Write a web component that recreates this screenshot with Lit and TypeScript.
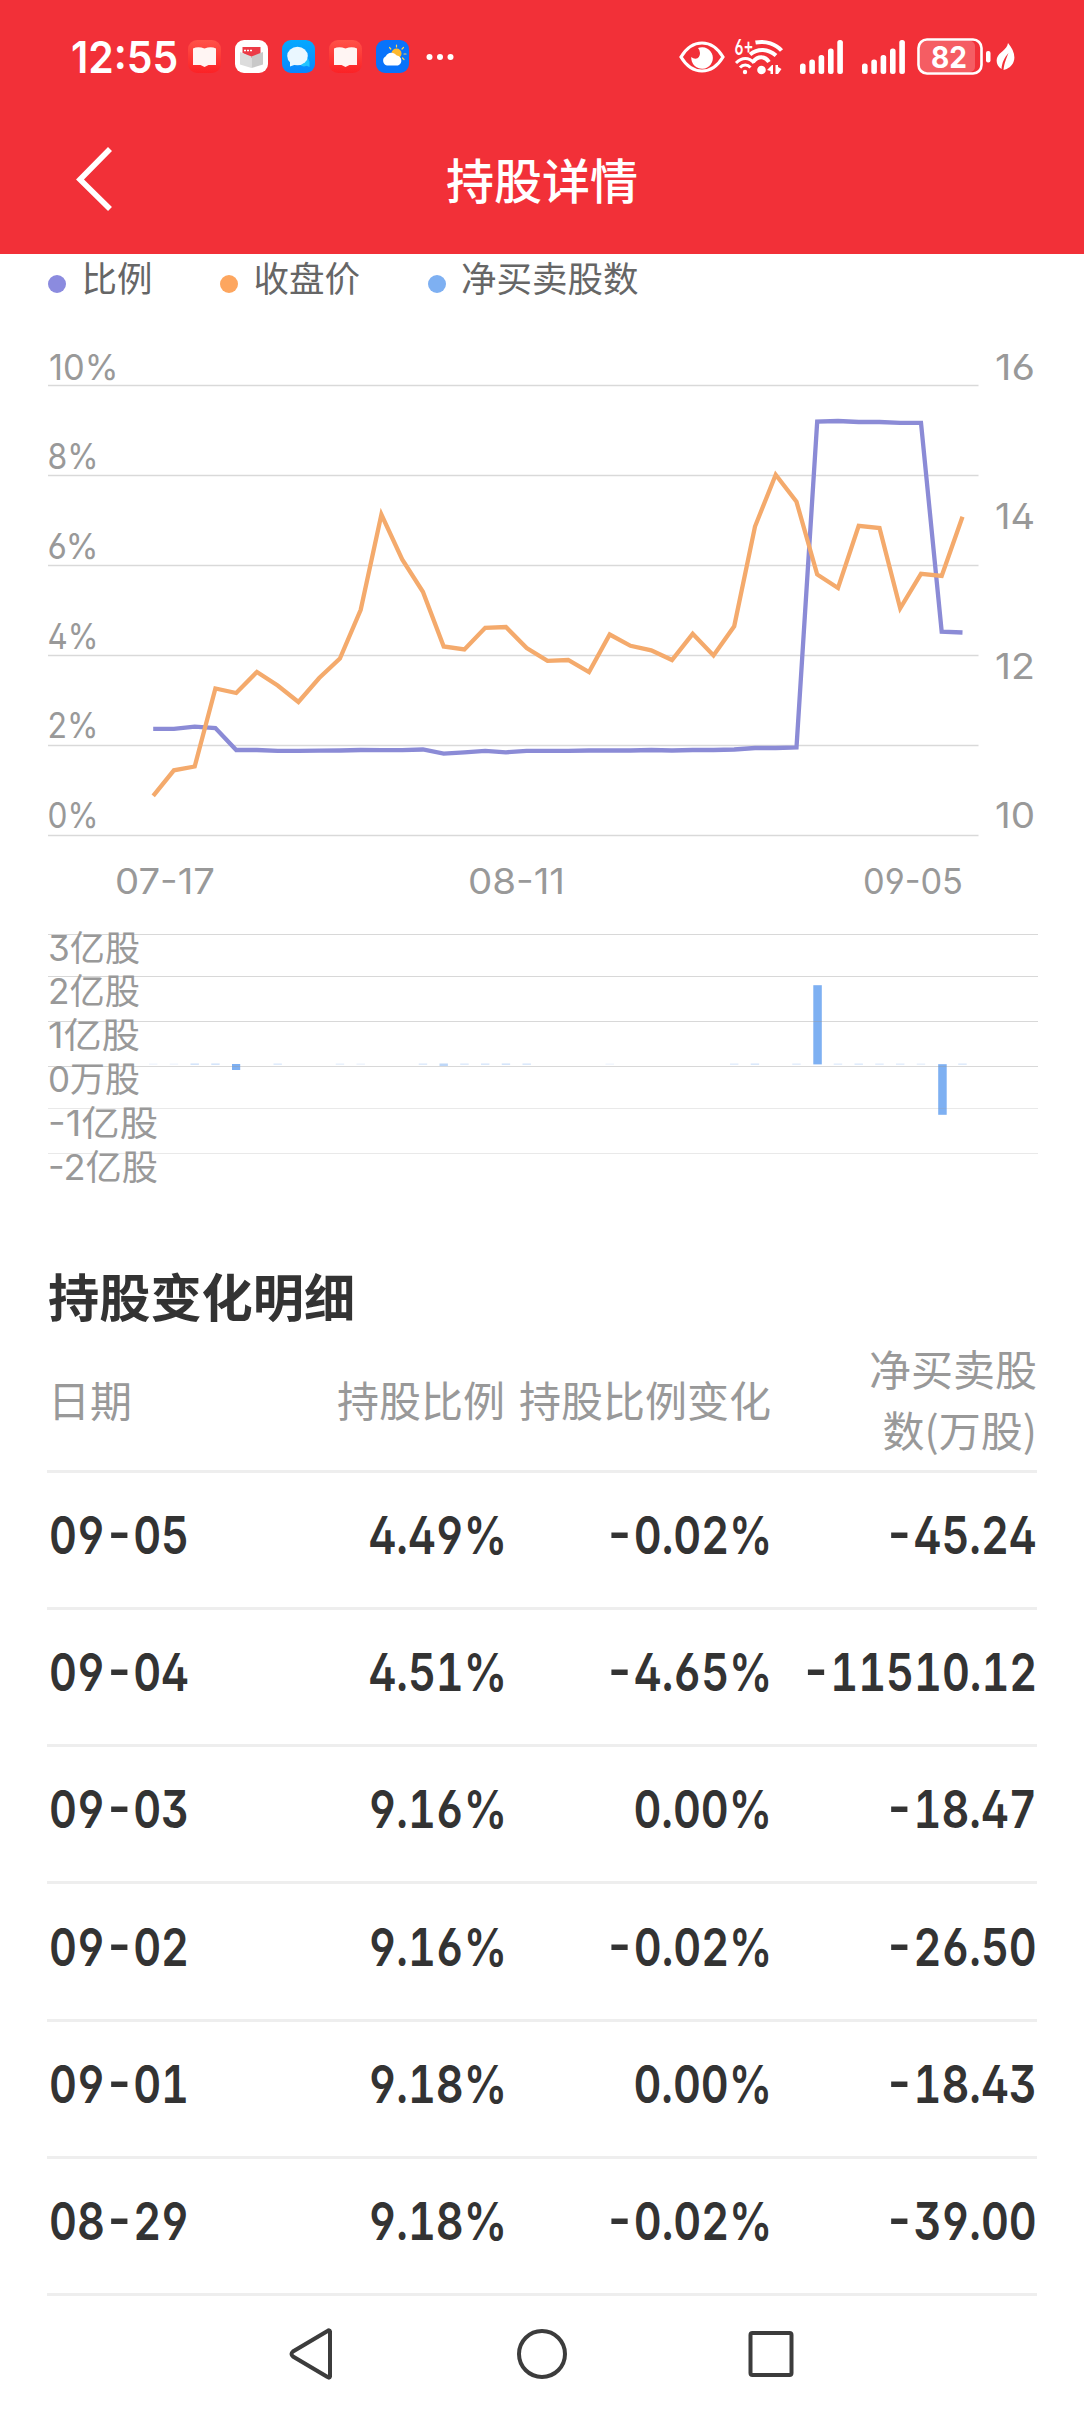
import { LitElement, html, svg, css } from "lit";
import { customElement } from "lit/decorators.js";

const PRICE = [
  10.53, 10.87, 10.92, 11.96, 11.9, 12.18, 12.0, 11.78, 12.1, 12.36,
  13.01, 14.28, 13.68, 13.25, 12.52, 12.48, 12.77, 12.78, 12.5, 12.33,
  12.34, 12.18, 12.68, 12.53, 12.47, 12.34, 12.69, 12.4, 12.79, 14.12,
  14.81, 14.45, 13.48, 13.3, 14.13, 14.1, 13.03, 13.49, 13.46, 14.25,
];
const RATIO = [
  2.37, 2.37, 2.42, 2.39, 1.9, 1.9, 1.88, 1.88, 1.885, 1.89,
  1.9, 1.895, 1.895, 1.91, 1.82, 1.85, 1.88, 1.85, 1.88, 1.88,
  1.88, 1.89, 1.89, 1.89, 1.9, 1.89, 1.9, 1.9, 1.91, 1.945,
  1.945, 1.96, 9.2, 9.21, 9.19, 9.19, 9.17, 9.17, 4.53, 4.51,
];
const X0 = 153.2;
const STEP = 20.75;
const BASE = 835.5;

const px = (i: number) => X0 + i * STEP;
const line = (data: number[], y: (v: number) => number) =>
  data.map((v, i) => `${px(i).toFixed(1)},${y(v).toFixed(1)}`).join(" ");

/* x, baseline, text, drawn width */
type Label = [number, number, string, number];
const LABELS: Label[] = [
  [49, 379.5, "10%", 69.5],
  [47.5, 469, "8%", 51],
  [47.5, 558.7, "6%", 51],
  [47.5, 648.5, "4%", 51],
  [47.5, 738, "2%", 51],
  [47.5, 827.8, "0%", 51],
  [995, 379.5, "16", 40],
  [995, 528.7, "14", 40],
  [995, 678.5, "12", 40],
  [995, 827.8, "10", 40],
  [115, 893.5, "07-17", 100],
  [468, 893.5, "08-11", 97],
  [863, 893.5, "09-05", 100],
];
const VOLUME_LABELS: Label[] = [
  [48, 960.5, "3亿股", 92],
  [48, 1004.3, "2亿股", 92],
  [48, 1048.1, "1亿股", 92],
  [48, 1091.8, "0万股", 92],
  [48, 1136, "-1亿股", 110],
  [48, 1180, "-2亿股", 110],
];
/* index, opacity of the near-zero volume marks */
const MARKS: [number, number][] = [
  [0, 0.12], [1, 0.12], [2, 0.4], [3, 0.4], [6, 0.3], [9, 0.2], [10, 0.15],
  [13, 0.3], [14, 0.5], [15, 0.3], [16, 0.35], [17, 0.4], [18, 0.35],
  [22, 0.12], [28, 0.25], [29, 0.35], [31, 0.25], [33, 0.25], [34, 0.3],
  [35, 0.25], [36, 0.25], [37, 0.2], [39, 0.3],
];

const ROWS = [
  ["09-05", "4.49%", "-0.02%", "-45.24"],
  ["09-04", "4.51%", "-4.65%", "-11510.12"],
  ["09-03", "9.16%", "0.00%", "-18.47"],
  ["09-02", "9.16%", "-0.02%", "-26.50"],
  ["09-01", "9.18%", "0.00%", "-18.43"],
  ["08-29", "9.18%", "-0.02%", "-39.00"],
];

const bookIcon = html`<svg class="app" viewBox="0 0 33 33">
  <defs><linearGradient id="bk" x1="0" y1="0" x2="0" y2="1"><stop offset="0" stop-color="#ff5148"/><stop offset="1" stop-color="#fb2226"/></linearGradient></defs>
  <rect width="33" height="33" rx="9" fill="url(#bk)"/>
  <path d="M5 8.5Q10 6 16.5 8.5Q23 6 28 8.5V25H20.5L16.5 27L12.500 25H5Z" fill="#fff5f3"/>
</svg>`;

const newsIcon = html`<svg class="app" viewBox="0 0 33 33">
  <rect width="33" height="33" rx="9" fill="#fff"/>
  <path d="M7.500 7H25.500V15L16.500 18L7.500 13Z" fill="#ec3b46"/>
  <path d="M9 10.500H18" stroke="#fff" stroke-width="1.400" stroke-dasharray="2 1"/>
  <path d="M5 12L16.500 16.500V28L5 24.500Z" fill="#dcdcdc"/>
  <path d="M28 12L16.500 16.500V28L28 24.500Z" fill="#c9c9c9"/>
</svg>`;

const chatIcon = html`<svg class="app" viewBox="0 0 33 33">
  <defs><linearGradient id="ch" x1="0" y1="0" x2="0" y2="1"><stop offset="0" stop-color="#04a9ff"/><stop offset="1" stop-color="#0a86ff"/></linearGradient></defs>
  <rect width="33" height="33" rx="9" fill="url(#ch)"/>
  <circle cx="22" cy="21.500" r="5" fill="#22c4ff"/><path d="M23 25L27.500 27V21Z" fill="#22c4ff"/>
  <ellipse cx="15.500" cy="16" rx="10.300" ry="9.300" fill="#eaf7ff"/>
  <path d="M8 21L8 26.500L15 24Z" fill="#eaf7ff"/>
</svg>`;

const weatherIcon = html`<svg class="app" viewBox="0 0 33 33">
  <rect width="33" height="33" rx="9" fill="#0873fb"/>
  <g stroke="#ffd34d" stroke-width="1.200" stroke-linecap="round"><path d="M20.500 7V5M14.800 9L13.500 7.500M26 9L27.500 7.500M28 14H30M26.500 18L28 19.500"/></g>
  <circle cx="20.500" cy="13.500" r="5" fill="#fdb92e"/>
  <path d="M11 25.500A5 5 0 0 1 9.800 16.200A6.500 6.500 0 0 1 20.800 15.500A5.200 5.200 0 0 1 22 25.500Z" fill="#fff"/>
</svg>`;

const signalIcon = html`<svg class="signal" viewBox="0 0 43 34" fill="#fff">
  <rect y="23.500" width="5.600" height="10.500" rx="2.500"/><rect x="9.300" y="19.500" width="5.600" height="14.500" rx="2.500"/>
  <rect x="18.600" y="15" width="5.600" height="19" rx="2.500"/><rect x="28" y="8.500" width="5.600" height="25.500" rx="2.500"/>
  <rect x="37.300" width="5.600" height="34" rx="2.500"/>
</svg>`;

@customElement("app-root")
export class AppRoot extends LitElement {
  static styles = css`
    :host {
      display: block;
      width: 1084px;
      height: 2412px;
      overflow: hidden;
      background: #fff;
      font-family: Inter, "Noto Sans CJK SC", sans-serif;
      font-feature-settings: "case", "cv03", "cv04", "ss01";
    }
    * { box-sizing: border-box; }
    svg { display: block; flex: none; }
    .top { height: 254px; background: #f23038; color: #fff; }
    .status { height: 113px; display: flex; align-items: center; padding: 0 69px 0 71px; }
    .time {
      width: 117px; font-size: 43.500px; font-weight: 600; line-height: 50px;
      font-feature-settings: "case"; white-space: nowrap;
    }
    .clock { display: inline-block; transform: scaleX(0.94); transform-origin: left; }
    .apps { display: flex; gap: 14px; }
    .app { width: 33px; height: 33px; }
    .more { width: 28px; height: 8px; margin-left: 17px; }
    .right { display: flex; margin-left: auto; align-items: center; }
    .eye { width: 46px; height: 34px; margin-right: 10px; }
    .wifi { width: 48px; height: 38px; margin-right: 17px; overflow: visible; }
    .signal { width: 43px; height: 34px; margin-right: 19px; }
    .signal + .signal { margin-right: 12px; }
    .battery { width: 74px; height: 38px; margin-right: 5px; }
    .leaf { width: 19px; height: 30px; }
    .title { height: 141px; display: grid; grid-template-columns: 150px 1fr 150px; align-items: center; padding-bottom: 4px; }
    .back { width: 44px; height: 70px; margin: 0 0 5px 71px; }
    .title-text { text-align: center; font-size: 48px; line-height: 60px; font-weight: 500; }
    .legend { height: 56px; display: flex; padding: 1px 48px 0; font-size: 35.500px; line-height: 50px; color: #666; }
    .key { display: flex; align-items: center; gap: 15.500px; height: 50px; margin-right: 67.500px; }
    .dot { width: 18px; height: 18px; border-radius: 50%; margin-top: 7px; }
    .ratio { background: #8b8bdf; }
    .price { background: #fda65f; }
    .net { background: #7eb0f2; }
    .charts { width: 1084px; height: 910px; }
    .label { font-size: 35.200px; fill: #999; }
    .detail { padding: 0 47px; }
    h2 { margin: 45px 0 0; height: 65px; font-size: 51.200px; line-height: 66px; font-weight: 700; color: #333; padding-left: 1px; }
    .row {
      display: grid; grid-template-columns: 179px 280px 265px 1fr; align-items: center;
      height: 137.170px; border-bottom: 3px solid #eee; padding: 0 0 10px 1px;
    }
    .head {
      height: 143px; color: #999; font-family: "Noto Sans CJK SC", sans-serif;
      grid-template-columns: 178px 280px 266px 1fr;
      font-feature-settings: normal; font-size: 42px; line-height: 61px; padding: 0 0 4px;
    }
    .cell { display: flex; justify-content: flex-end; text-align: right; white-space: nowrap; min-width: 0; }
    .cell:first-child { justify-content: flex-start; padding-left: 1px; }
    .cell.wrap { white-space: normal; padding-left: 60px; }
    .num {
      display: block; flex: none; font-size: 52.300px; line-height: 64px; font-weight: 600; color: #333;
      font-feature-settings: "tnum", "case", "cv03", "cv04", "ss01";
      transform: scaleX(0.825); transform-origin: right center;
    }
    .cell:first-child .num { transform-origin: left center; }
    .dash {
      display: inline-block; margin: 0 5px; transform: scaleX(1.15);
      font-feature-settings: "case";
    }
    .nav { display: flex; align-items: center; height: 116px; }
    .nav svg { width: 50px; height: 54px; }
    .triangle { margin-left: 286px; }
    .circle { margin-left: 181px; }
    .square { margin-left: 179px; }
  `;

  private text([x, y, value, width]: Label) {
    return svg`<text class="label" x=${x} y=${y} textLength=${width} lengthAdjust="spacingAndGlyphs">${value}</text>`;
  }

  private charts() {
    return html`<svg class="charts" viewBox="0 310 1084 910">
      ${[0, 1, 2, 3, 4, 5].map((i) => svg`<path d="M48 ${385.5 + i * 90}H978.500" stroke="#d9d9d9" stroke-width="1.400"/>`)}
      ${LABELS.map((l) => this.text(l))}
      <polyline points=${line(RATIO, (v) => BASE - v * 45)} fill="none" stroke="#8b8bd6" stroke-width="4.300"/>
      <polyline points=${line(PRICE, (v) => BASE - (v - 10) * 75)} fill="none" stroke="#f4aa6c" stroke-width="4.300"/>
      ${MARKS.map(([i, o]) => svg`<rect x=${px(i) - 4.2} y="1063.500" width="8.400" height=${o >= 0.5 ? 2.5 : 1.3} fill="#7eb0f2" opacity=${o}/>`)}
      <rect x="232" y="1064" width="8.200" height="6" fill="#7eb0f2"/>
      <rect x="813.300" y="985.200" width="8.500" height="79.200" fill="#7eb0f2"/>
      <rect x="938.200" y="1064.200" width="8.500" height="50.600" fill="#7eb0f2"/>
      ${[934.5, 976.5, 1021.5, 1066.5, 1108.5, 1153.5].map(
        (y, i) => svg`<path d="M48 ${y}H1038" stroke="#999" stroke-opacity=${i > 3 ? 0.22 : 0.38} stroke-width="1.200"/>`
      )}
      ${VOLUME_LABELS.map((l) => this.text(l))}
    </svg>`;
  }

  private num(value: string) {
    const parts = value.split("-");
    return html`<span class="num">${parts.map((p, i) => (i ? html`<span class="dash">-</span>${p}` : p))}</span>`;
  }

  render() {
    return html`
      <header class="top">
        <div class="status">
          <div class="time"><span class="clock">12:55</span></div>
          <div class="apps">${bookIcon}${newsIcon}${chatIcon}${bookIcon}${weatherIcon}</div>
          <svg class="more" viewBox="0 0 28 8" fill="#fff"><circle cx="3.500" cy="4" r="3"/><circle cx="14" cy="4" r="3"/><circle cx="24.500" cy="4" r="3"/></svg>
          <div class="right">
            <svg class="eye" viewBox="0 0 46 34">
              <path d="M2 17C8 7 15 3 23 3S38 7 44 17C38 27 31 31 23 31S8 27 2 17Z" fill="none" stroke="#fff" stroke-width="3.200"/>
              <path d="M19 8A10.800 10.800 0 1 1 12.300 17Q14 18.800 16.500 18.800Q21 18 21 13Q21 10 19 8Z" fill="#fff"/>
            </svg>
            <svg class="wifi" viewBox="0 0 48 38">
              <text x="-0.500" y="16.500" font-size="21.500" font-weight="600" fill="#fff" textLength="19" lengthAdjust="spacingAndGlyphs">6+</text>
              <g fill="none" stroke="#fff" stroke-width="4">
                <path d="M20.500 4.500C31 2.500 41 6 46.500 12.500M15 16.500C23 10 33 10.500 41 17.500M18 24C23 17.500 30 18 34 24"/>
                <path d="M1 25C7 19 14 19 19 25M5 29.500C8 26 12.500 26 15.500 29.500" stroke-width="3"/>
              </g>
              <circle cx="10" cy="34" r="2.200" fill="#fff"/><circle cx="26.500" cy="32" r="4.300" fill="#fff"/>
              <path d="M38 27V36H35.500V33L32 32L37 27ZM40.500 27H43V29L46.500 31L43 36H40.500Z" fill="#fff"/>
            </svg>
            ${signalIcon}${signalIcon}
            <svg class="battery" viewBox="0 0 74 38">
              <rect x="3" y="3" width="55" height="31" rx="5" fill="#fff" opacity="0.220"/>
              <rect x="1.500" y="1.500" width="63" height="34" rx="8.500" fill="none" stroke="#fff" stroke-width="2.600"/>
              <rect x="69" y="13" width="4.500" height="11.500" rx="2" fill="#fff"/>
              <text x="14" y="29.500" font-size="30" font-weight="700" fill="#fff" textLength="36" lengthAdjust="spacingAndGlyphs">82</text>
            </svg>
            <svg class="leaf" viewBox="0 0 19 30" fill="#fff">
              <path d="M12 1C17 7 20 14 17.500 20C16 24 12 27 7.500 28C8 21 11 15 12.500 11C8 16 6 21 5.500 27C1 24 0 20 1 16C3 10 11 8 12 1Z"/>
            </svg>
          </div>
        </div>
        <div class="title">
          <svg class="back" viewBox="0 0 44 70"><path d="M39 5L9 35.500L39 65" fill="none" stroke="#fff" stroke-width="5.600"/></svg>
          <div class="title-text">持股详情</div>
        </div>
      </header>
      <div class="legend">
        <div class="key"><i class="dot ratio"></i>比例</div>
        <div class="key"><i class="dot price"></i>收盘价</div>
        <div class="key"><i class="dot net"></i>净买卖股数</div>
      </div>
      ${this.charts()}
      <section class="detail">
        <h2>持股变化明细</h2>
        <div class="row head">
          <div class="cell">日期</div><div class="cell">持股比例</div><div class="cell">持股比例变化</div>
          <div class="cell wrap">净买卖股数(万股)</div>
        </div>
        ${ROWS.map((r) => html`<div class="row">${r.map((c) => html`<div class="cell">${this.num(c)}</div>`)}</div>`)}
      </section>
      <nav class="nav">
        <svg class="triangle" viewBox="0 0 50 54"><path d="M44 4.500V49.500Q43.500 51.500 41.500 50L7 29.500Q4 27 7 24.500L41.500 4Q43.500 2.500 44 4.500Z" fill="none" stroke="#3c3c3c" stroke-width="4"/></svg>
        <svg class="circle" viewBox="0 0 50 54"><circle cx="25" cy="27" r="23" fill="none" stroke="#3c3c3c" stroke-width="4"/></svg>
        <svg class="square" viewBox="0 0 50 54"><rect x="4.500" y="6" width="41" height="42" rx="2" fill="none" stroke="#3c3c3c" stroke-width="4"/></svg>
      </nav>
    `;
  }
}
